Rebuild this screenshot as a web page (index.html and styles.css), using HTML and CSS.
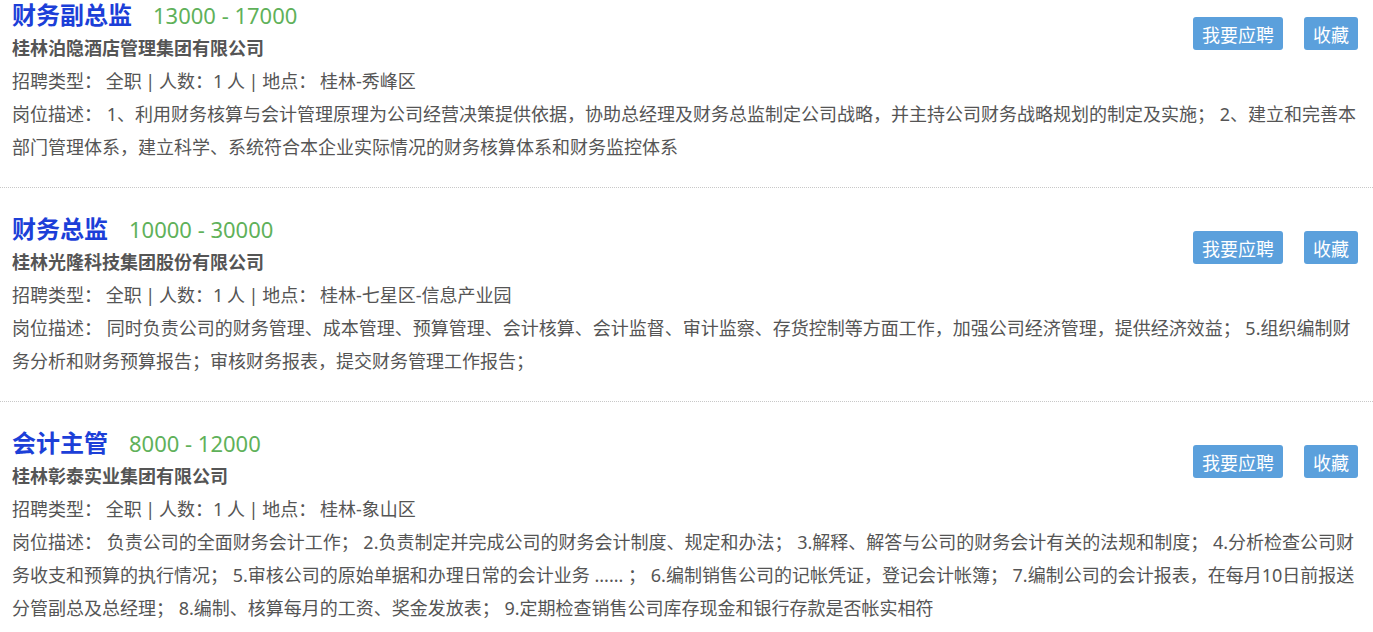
FILE: index.html
```html
<!DOCTYPE html>
<html lang="zh-CN">
<head>
    <meta charset="UTF-8">
    <meta name="viewport" content="width=device-width, initial-scale=1.0">
    <title>招聘职位列表</title>
    <link rel="stylesheet" href="styles.css">
</head>
<body>
    <div class="job-list">
        <div class="job-item">
            <div class="job-head">
                <div class="job-main">
                    <div class="job-title">
                        <a href="#" class="job-name">财务副总监</a>
                        <span class="salary">13000 - 17000</span>
                    </div>
                    <p class="company">桂林泊隐酒店管理集团有限公司</p>
                    <p class="meta">招聘类型： 全职 | 人数：1 人 | 地点： 桂林-秀峰区</p>
                </div>
                <div class="actions">
                    <button class="btn">我要应聘</button>
                    <button class="btn">收藏</button>
                </div>
            </div>
            <p class="desc">岗位描述： 1、利用财务核算与会计管理原理为公司经营决策提供依据，协助总经理及财务总监制定公司战略，并主持公司财务战略规划的制定及实施； 2、建立和完善本部门管理体系，建立科学、系统符合本企业实际情况的财务核算体系和财务监控体系</p>
        </div>

        <div class="job-item">
            <div class="job-head">
                <div class="job-main">
                    <div class="job-title">
                        <a href="#" class="job-name">财务总监</a>
                        <span class="salary">10000 - 30000</span>
                    </div>
                    <p class="company">桂林光隆科技集团股份有限公司</p>
                    <p class="meta">招聘类型： 全职 | 人数：1 人 | 地点： 桂林-七星区-信息产业园</p>
                </div>
                <div class="actions">
                    <button class="btn">我要应聘</button>
                    <button class="btn">收藏</button>
                </div>
            </div>
            <p class="desc">岗位描述： 同时负责公司的财务管理、成本管理、预算管理、会计核算、会计监督、审计监察、存货控制等方面工作，加强公司经济管理，提供经济效益； 5.组织编制财务分析和财务预算报告；审核财务报表，提交财务管理工作报告；</p>
        </div>

        <div class="job-item">
            <div class="job-head">
                <div class="job-main">
                    <div class="job-title">
                        <a href="#" class="job-name">会计主管</a>
                        <span class="salary">8000 - 12000</span>
                    </div>
                    <p class="company">桂林彰泰实业集团有限公司</p>
                    <p class="meta">招聘类型： 全职 | 人数：1 人 | 地点： 桂林-象山区</p>
                </div>
                <div class="actions">
                    <button class="btn">我要应聘</button>
                    <button class="btn">收藏</button>
                </div>
            </div>
            <p class="desc">岗位描述： 负责公司的全面财务会计工作； 2.负责制定并完成公司的财务会计制度、规定和办法； 3.解释、解答与公司的财务会计有关的法规和制度； 4.分析检查公司财务收支和预算的执行情况； 5.审核公司的原始单据和办理日常的会计业务 ...... ； 6.编制销售公司的记帐凭证，登记会计帐簿； 7.编制公司的会计报表，在每月10日前报送分管副总及总经理； 8.编制、核算每月的工资、奖金发放表； 9.定期检查销售公司库存现金和银行存款是否帐实相符</p>
        </div>
    </div>
</body>
</html>
```

FILE: styles.css
```css
body {
    font-family: "Noto Sans", "Noto Sans CJK SC", sans-serif;
    background-color: #ffffff;
    color: #555;
    margin: 0;
    padding: 0;
    overflow: hidden;
}
.job-list {
    margin-top: -26px;
}
.job-item {
    padding: 23px 12px;
    border-bottom: 1px dotted #c8c8c8;
}
.job-head {
    display: flex;
    justify-content: space-between;
    align-items: flex-start;
}
.job-title {
    display: flex;
    align-items: baseline;
    height: 35px;
    line-height: 35px;
}
.job-name {
    font-size: 24px;
    font-weight: bold;
    color: #1c3fd8;
    text-decoration: none;
    margin-right: 21px;
}
.salary {
    font-size: 22px;
    color: #5fb15a;
}
.company {
    margin: 0;
    font-size: 18px;
    font-weight: bold;
    line-height: 33px;
    color: #555;
}
.meta,
.desc {
    margin: 0;
    font-size: 18px;
    line-height: 33px;
    color: #555;
}
.meta {
    word-spacing: -1px;
}
.actions {
    display: flex;
    gap: 21px;
    margin-top: 20px;
    margin-right: 3px;
}
.btn {
    height: 33px;
    padding: 0 9px;
    border: none;
    border-radius: 3px;
    background-color: #5ba0dc;
    color: #fff;
    font-family: "Noto Sans CJK SC", sans-serif;
    font-size: 18px;
    cursor: pointer;
}
.btn:hover {
    background-color: #4a8fcb;
}
```
